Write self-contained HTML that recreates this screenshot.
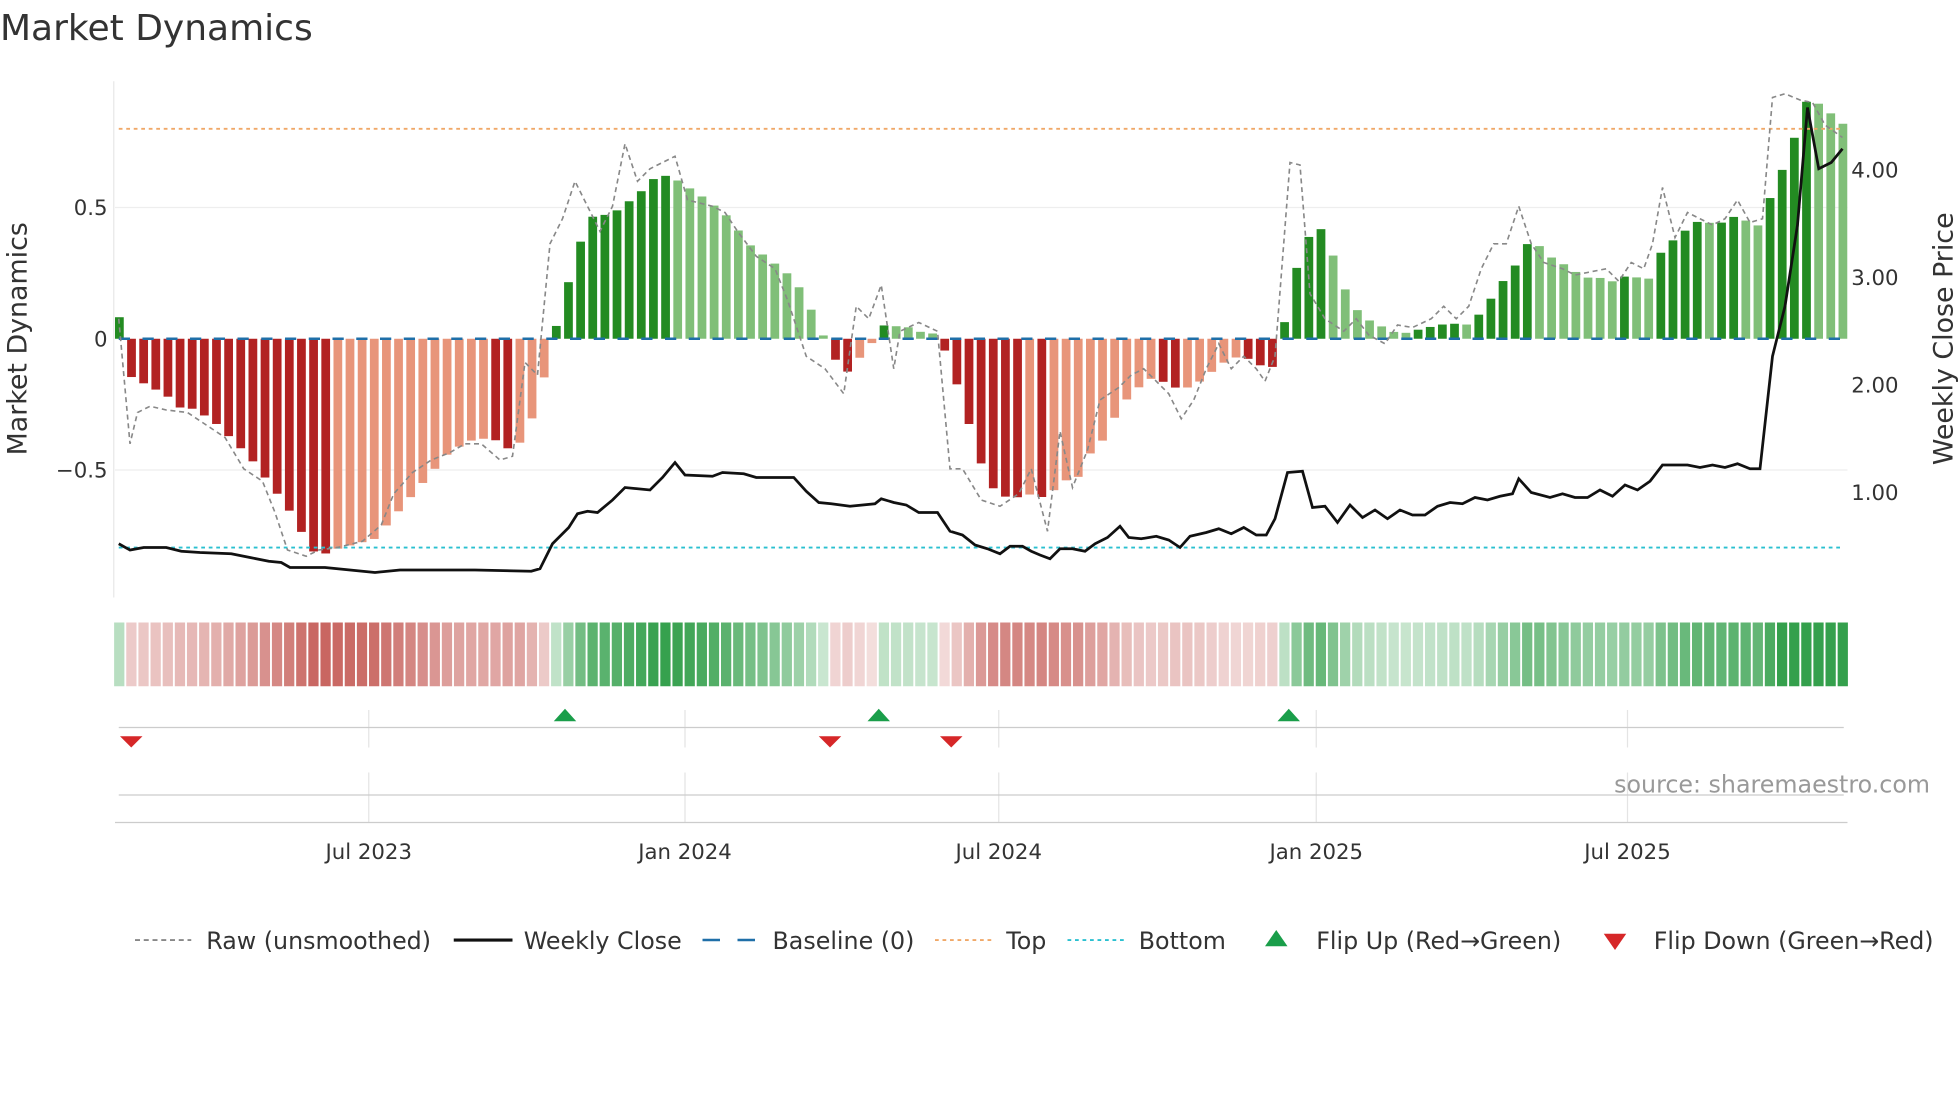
<!DOCTYPE html>
<html><head><meta charset="utf-8"><style>
html,body{margin:0;padding:0;background:#fff;}
svg{display:block;font-family:"DejaVu Sans","Liberation Sans",sans-serif;}
</style></head><body>
<svg id="s" width="1960" height="1102" viewBox="0 0 1568 881.6" xmlns="http://www.w3.org/2000/svg">
<text x="0" y="32" font-size="28.8" fill="#333">Market Dynamics</text>
<line x1="91" y1="65" x2="91" y2="478" stroke="#e8e8e8"/>
<line x1="92" y1="166" x2="1478" y2="166" stroke="#eeeeee"/>
<line x1="92" y1="376" x2="1478" y2="376" stroke="#eeeeee"/>
<g font-size="17" fill="#333">
<text x="86" y="172" text-anchor="end">0.5</text>
<text x="86" y="277" text-anchor="end">0</text>
<text x="86" y="382" text-anchor="end">−0.5</text>
<text x="1481" y="142">4.00</text>
<text x="1481" y="228">3.00</text>
<text x="1481" y="314">2.00</text>
<text x="1481" y="400">1.00</text>
</g>
<text transform="translate(21,271) rotate(-90)" font-size="21.5" fill="#333" text-anchor="middle">Market Dynamics</text>
<text transform="translate(1562,271) rotate(-90)" font-size="21.5" fill="#333" text-anchor="middle">Weekly Close Price</text>
<g id="bars"></g>
<line x1="95" y1="103" x2="1475" y2="103" stroke="#f0a868" stroke-width="1.5" stroke-dasharray="3,3"/>
<line x1="95" y1="438" x2="1475" y2="438" stroke="#2ac0d0" stroke-width="1.5" stroke-dasharray="3,3"/>
<line x1="95" y1="271" x2="1475" y2="271" stroke="#1f6fa8" stroke-width="2" stroke-dasharray="9,10"/>
<polyline id="raw" fill="none" stroke="#888" stroke-width="1.3" stroke-dasharray="4,3"/>
<polyline id="close" fill="none" stroke="#111" stroke-width="2.2"/>
<g id="strip"></g>
<g stroke="#e4e4e4">
<line x1="295" y1="568" x2="295" y2="598"/><line x1="548" y1="568" x2="548" y2="598"/><line x1="799" y1="568" x2="799" y2="598"/><line x1="1053" y1="568" x2="1053" y2="598"/><line x1="1302" y1="568" x2="1302" y2="598"/>
<line x1="295" y1="618" x2="295" y2="658"/><line x1="548" y1="618" x2="548" y2="658"/><line x1="799" y1="618" x2="799" y2="658"/><line x1="1053" y1="618" x2="1053" y2="658"/><line x1="1302" y1="618" x2="1302" y2="658"/>
</g>
<line x1="95" y1="582" x2="1475" y2="582" stroke="#ccc"/>
<line x1="95" y1="636" x2="1475" y2="636" stroke="#ccc"/>
<line x1="92" y1="658" x2="1478" y2="658" stroke="#ccc"/>
<g fill="#d62728">
<polygon points="96,589 114,589 105,598"/><polygon points="655,589 673,589 664,598"/><polygon points="752,589 770,589 761,598"/>
</g>
<g fill="#1a9e4a">
<polygon points="443,577 461,577 452,567"/><polygon points="694,577 712,577 703,567"/><polygon points="1022,577 1040,577 1031,567"/>
</g>
<text x="1544" y="634" font-size="19" fill="#999" text-anchor="end">source: sharemaestro.com</text>
<g font-size="17" fill="#333" text-anchor="middle">
<text x="295" y="687">Jul 2023</text><text x="548" y="687">Jan 2024</text><text x="799" y="687">Jul 2024</text><text x="1053" y="687">Jan 2025</text><text x="1302" y="687">Jul 2025</text>
</g>
<g font-size="19" fill="#333">
<line x1="108" y1="752" x2="153" y2="752" stroke="#888" stroke-width="1.5" stroke-dasharray="4,3"/><text x="165" y="759">Raw (unsmoothed)</text>
<line x1="363" y1="752" x2="410" y2="752" stroke="#111" stroke-width="2.5"/><text x="419" y="759">Weekly Close</text>
<line x1="562" y1="752" x2="607" y2="752" stroke="#1f6fa8" stroke-width="2" stroke-dasharray="14,14"/><text x="618" y="759">Baseline (0)</text>
<line x1="748" y1="752" x2="793" y2="752" stroke="#f0a868" stroke-width="1.5" stroke-dasharray="3,3"/><text x="805" y="759">Top</text>
<line x1="854" y1="752" x2="899" y2="752" stroke="#2ac0d0" stroke-width="1.5" stroke-dasharray="3,3"/><text x="911" y="759">Bottom</text>
<polygon points="1012,757 1030,757 1021,744" fill="#1a9e4a"/><text x="1053" y="759">Flip Up (Red→Green)</text>
<polygon points="1283,747 1301,747 1292,760" fill="#d62728"/><text x="1323" y="759">Flip Down (Green→Red)</text>
</g>
</svg>
<script>
var K=[[95,20],[104,-30],[133,-45],[143,-55],[152,-55],[170,-65],[200,-95],[230,-135],[250,-170],[260,-172],[270,-168],[300,-160],[330,-125],[360,-90],[380,-80],[395,-80],[405,-88],[415,-85],[430,-55],[440,-10],[450,30],[460,62],[470,97],[490,100],[510,115],[527,132],[540,128],[560,115],[580,100],[600,75],[620,60],[635,48],[645,32],[655,10],[665,-10],[675,-30],[685,-18],[695,-8],[705,10],[712,12],[722,8],[730,10],[740,3],[750,5],[760,-20],[770,-50],[780,-85],[790,-115],[800,-125],[810,-128],[820,-125],[830,-124],[838,-130],[845,-118],[855,-112],[865,-110],[875,-85],[885,-80],[895,-55],[905,-45],[915,-35],[925,-30],[935,-38],[945,-40],[955,-38],[965,-30],[975,-22],[985,-15],[995,-15],[1005,-18],[1015,-28],[1022,-15],[1030,25],[1040,68],[1050,87],[1060,88],[1070,55],[1080,30],[1090,18],[1100,12],[1110,8],[1118,4],[1127,5],[1137,8],[1147,10],[1157,12],[1167,12],[1177,11],[1185,22],[1195,35],[1205,50],[1215,62],[1225,82],[1235,70],[1245,62],[1255,58],[1265,50],[1275,48],[1283,49],[1292,45],[1300,50],[1310,49],[1320,48],[1330,72],[1340,80],[1350,88],[1360,95],[1370,92],[1378,93],[1388,98],[1398,94],[1408,90],[1418,118],[1428,140],[1437,165],[1446,192],[1455,188],[1465,180],[1474,172]];
function f(x){if(x<=K[0][0])return K[0][1];for(var i=1;i<K.length;i++){if(x<=K[i][0]){var a=K[i-1],b=K[i];return a[1]+(b[1]-a[1])*(x-a[0])/(b[0]-a[0]);}}return K[K.length-1][1];}
var NS="http://www.w3.org/2000/svg",bars=document.getElementById('bars'),strip=document.getElementById('strip');
function mix(c,t){var w=[255,255,255];return 'rgb('+c.map(function(v,i){return Math.round(w[i]+(v-w[i])*t)}).join(',')+')';}
var prev=0;
for(var i=0;i<143;i++){var cx=95.5+i*9.71,v=f(cx);var col;
 if(v>=0)col=(v>=prev)?'#238b22':'#80bf78';else col=(v<=prev)?'#b22222':'#e8957a';
 if(i==0)col='#238b22';
 var r=document.createElementNS(NS,'rect');r.setAttribute('x',cx-3.5);r.setAttribute('width',7);
 r.setAttribute('y',v>=0?271-v:271);r.setAttribute('height',Math.abs(v));r.setAttribute('fill',col);bars.appendChild(r);
 var t=0.2+0.8*Math.min(1,Math.abs(v)/175);
 var sc=v>=0?mix([52,160,76],Math.min(1,0.25+0.85*Math.min(1,Math.abs(v)/150))):mix([200,100,95],t);
 var s=document.createElementNS(NS,'rect');s.setAttribute('x',cx-4.2);s.setAttribute('width',8.2);s.setAttribute('y',498);s.setAttribute('height',51);s.setAttribute('fill',sc);strip.appendChild(s);
 prev=v;}
document.getElementById('close').setAttribute('points',"95,435 104,440 115,438 133,438 145,441 160,442 185,443 200,446 215,449 225,450 232,454 260,454 270,455 280,456 300,458 320,456 340,456 380,456 425,457 432,455 442,435 455,422 462,411 470,409 478,410 490,400 500,390 520,392 530,382 540,370 548,380 570,381 578,378 595,379 605,382 635,382 645,393 655,402 665,403 680,405 700,403 705,399 715,402 725,404 735,410 750,410 760,425 770,428 780,436 790,439 800,443 808,437 818,437 825,441 832,444 840,447 848,439 858,439 868,441 876,435 886,430 896,421 903,430 913,431 925,429 935,432 944,438 952,429 965,426 975,423 985,427 995,422 1005,428 1013,428 1020,415 1030,378 1042,377 1050,406 1060,405 1070,418 1080,404 1090,414 1100,408 1110,415 1120,408 1130,412 1140,412 1150,405 1160,402 1170,403 1180,398 1190,400 1200,397 1210,395 1215,383 1225,394 1240,398 1250,395 1260,398 1270,398 1280,392 1290,397 1300,388 1310,392 1320,385 1330,372 1350,372 1360,374 1370,372 1380,374 1390,371 1400,375 1408,375 1418,285 1428,245 1438,180 1446,86 1455,135 1465,130 1474,119");
document.getElementById('raw').setAttribute('points',"95,255 104,355 110,330 120,325 133,328 150,330 165,340 180,350 195,375 210,385 220,410 230,440 245,445 255,440 270,438 290,433 305,420 315,395 330,378 345,368 360,362 372,355 385,355 400,368 410,365 420,290 430,300 440,195 450,175 460,145 470,165 480,185 490,165 500,115 510,145 520,135 530,130 540,125 550,160 570,165 580,170 590,185 605,205 620,215 630,240 640,270 645,285 660,295 675,315 685,245 695,255 705,228 715,295 720,265 735,258 750,265 760,375 770,375 785,400 800,405 815,395 825,375 838,425 848,345 858,390 870,360 880,320 895,310 905,300 915,295 935,315 945,335 955,320 965,295 975,275 985,295 995,285 1005,295 1012,305 1020,285 1032,130 1040,132 1048,235 1060,255 1075,265 1085,255 1095,268 1108,275 1118,260 1130,262 1145,255 1155,245 1165,255 1175,245 1185,215 1195,195 1205,195 1215,165 1225,195 1235,210 1250,215 1260,220 1270,218 1285,215 1295,225 1305,210 1315,215 1322,195 1330,150 1340,190 1350,170 1360,175 1370,180 1380,175 1390,160 1400,178 1410,175 1418,78 1428,75 1440,80 1450,82 1460,100 1474,110");
</script>
</body></html>
